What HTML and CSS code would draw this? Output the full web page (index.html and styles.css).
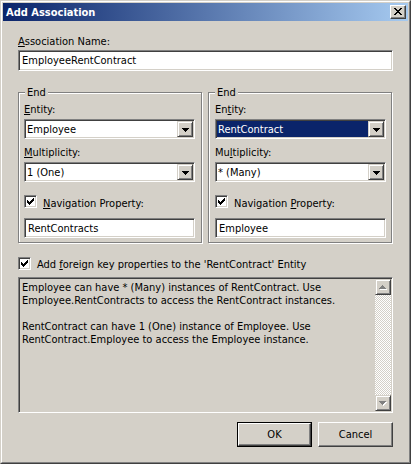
FILE: index.html
```html
<!DOCTYPE html>
<html>
<head>
<meta charset="utf-8">
<title>Add Association</title>
<link rel="stylesheet" href="styles.css">
</head>
<body>
<div class="window">
  <div class="frame">
    <div class="titlebar">
      <span class="title">Add Association</span>
      <span class="close">
        <svg width="8" height="7" viewBox="0 0 8 7" shape-rendering="crispEdges"><path fill="#000" d="M0 0h2v1h-2z M6 0h2v1h-2z M1 1h2v1h-2z M5 1h2v1h-2z M2 2h4v1h-4z M3 3h2v1h-2z M2 4h4v1h-4z M1 5h2v1h-2z M5 5h2v1h-2z M0 6h2v1h-2z M6 6h2v1h-2z"/></svg>
      </span>
    </div>
    <div class="content">
      <div class="label name-label"><u>A</u>ssociation Name:</div>
      <div class="textbox name-box">EmployeeRentContract</div>

      <div class="groups">
        <div class="group group-left">
          <span class="legend">End</span>
          <div class="label first"><u>E</u>ntity:</div>
          <div class="combo">
            <span class="combo-text">Employee</span>
            <span class="combo-btn"><svg width="7" height="4" viewBox="0 0 7 4" shape-rendering="crispEdges"><path fill="#000" d="M0 0h7v1h-7z M1 1h5v1h-5z M2 2h3v1h-3z M3 3h1v1h-1z"/></svg></span>
          </div>
          <div class="label second"><u>M</u>ultiplicity:</div>
          <div class="combo">
            <span class="combo-text">1 (One)</span>
            <span class="combo-btn"><svg width="7" height="4" viewBox="0 0 7 4" shape-rendering="crispEdges"><path fill="#000" d="M0 0h7v1h-7z M1 1h5v1h-5z M2 2h3v1h-3z M3 3h1v1h-1z"/></svg></span>
          </div>
          <div class="check-row nav-row">
            <span class="checkbox"><svg width="7" height="7" viewBox="0 0 7 7" shape-rendering="crispEdges"><path fill="#000" d="M6 0h1v1h-1z M5 1h2v1h-2z M0 2h1v1h-1z M4 2h3v1h-3z M0 3h2v1h-2z M3 3h3v1h-3z M0 4h5v1h-5z M1 5h3v1h-3z M2 6h1v1h-1z"/></svg></span>
            <span class="check-label"><u>N</u>avigation Property:</span>
          </div>
          <div class="textbox nav-box">RentContracts</div>
        </div>

        <div class="group group-right">
          <span class="legend">End</span>
          <div class="label first">En<u>t</u>ity:</div>
          <div class="combo">
            <span class="combo-text selected">RentContract</span>
            <span class="combo-btn"><svg width="7" height="4" viewBox="0 0 7 4" shape-rendering="crispEdges"><path fill="#000" d="M0 0h7v1h-7z M1 1h5v1h-5z M2 2h3v1h-3z M3 3h1v1h-1z"/></svg></span>
          </div>
          <div class="label second">Mu<u>l</u>tiplicity:</div>
          <div class="combo">
            <span class="combo-text">* (Many)</span>
            <span class="combo-btn"><svg width="7" height="4" viewBox="0 0 7 4" shape-rendering="crispEdges"><path fill="#000" d="M0 0h7v1h-7z M1 1h5v1h-5z M2 2h3v1h-3z M3 3h1v1h-1z"/></svg></span>
          </div>
          <div class="check-row nav-row">
            <span class="checkbox"><svg width="7" height="7" viewBox="0 0 7 7" shape-rendering="crispEdges"><path fill="#000" d="M6 0h1v1h-1z M5 1h2v1h-2z M0 2h1v1h-1z M4 2h3v1h-3z M0 3h2v1h-2z M3 3h3v1h-3z M0 4h5v1h-5z M1 5h3v1h-3z M2 6h1v1h-1z"/></svg></span>
            <span class="check-label">Navigation <u>P</u>roperty:</span>
          </div>
          <div class="textbox nav-box">Employee</div>
        </div>
      </div>

      <div class="check-row fk-row">
        <span class="checkbox"><svg width="7" height="7" viewBox="0 0 7 7" shape-rendering="crispEdges"><path fill="#000" d="M6 0h1v1h-1z M5 1h2v1h-2z M0 2h1v1h-1z M4 2h3v1h-3z M0 3h2v1h-2z M3 3h3v1h-3z M0 4h5v1h-5z M1 5h3v1h-3z M2 6h1v1h-1z"/></svg></span>
        <span class="check-label">Add <u>f</u>oreign key properties to the 'RentContract' Entity</span>
      </div>

      <div class="memo">
        <div class="memo-text">
          <div class="line">Employee can have * (Many) instances of RentContract. Use</div>
          <div class="line">Employee.RentContracts to access the RentContract instances.</div>
          <div class="line">&nbsp;</div>
          <div class="line">RentContract can have 1 (One) instance of Employee. Use</div>
          <div class="line">RentContract.Employee to access the Employee instance.</div>
        </div>
        <div class="scrollbar">
          <span class="sb-btn"><svg width="8" height="5" viewBox="0 0 8 5" shape-rendering="crispEdges"><path fill="#fff" d="M4 1h1v1h-1z M3 2h3v1h-3z M2 3h5v1h-5z M1 4h7v1h-7z"/><path fill="#808080" d="M3 0h1v1h-1z M2 1h3v1h-3z M1 2h5v1h-5z M0 3h7v1h-7z"/></svg></span>
          <span class="sb-track"></span>
          <span class="sb-btn"><svg width="8" height="5" viewBox="0 0 8 5" shape-rendering="crispEdges"><path fill="#fff" d="M1 1h7v1h-7z M2 2h5v1h-5z M3 3h3v1h-3z M4 4h1v1h-1z"/><path fill="#808080" d="M0 0h7v1h-7z M1 1h5v1h-5z M2 2h3v1h-3z M3 3h1v1h-1z"/></svg></span>
        </div>
      </div>

      <div class="buttons">
        <div class="btn btn-default"><span class="btn-face">OK</span></div>
        <div class="btn"><span class="btn-face">Cancel</span></div>
      </div>
    </div>
  </div>
</div>
</body>
</html>
```

FILE: styles.css
```css
* {
  box-sizing: border-box;
}

html, body {
  margin: 0;
  padding: 0;
}

body {
  width: 411px;
  height: 464px;
  overflow: hidden;
  background: #d4d0c8;
  font-family: "DejaVu Sans", "Liberation Sans", sans-serif;
  font-stretch: semi-condensed;
  font-size: 11px;
  line-height: 13px;
  color: #000;
}

u {
  text-decoration: underline;
  text-underline-offset: 1px;
}

.window {
  width: 411px;
  height: 464px;
  border: 1px solid;
  border-color: #d4d0c8 #404040 #404040 #d4d0c8;
  background: #d4d0c8;
}

.frame {
  height: 100%;
  border: 1px solid;
  border-color: #fff #808080 #808080 #fff;
  padding: 1px;
  display: flex;
  flex-direction: column;
}

.titlebar {
  flex: none;
  height: 18px;
  background: linear-gradient(to right, #0a246a, #a6caf0);
  display: flex;
  align-items: center;
  justify-content: space-between;
  padding: 0 2px 0 3px;
}

.title {
  color: #fff;
  font-weight: bold;
}

.close {
  width: 16px;
  height: 14px;
  background: #d4d0c8;
  border: 1px solid;
  border-color: #fff #404040 #404040 #fff;
  box-shadow: inset -1px -1px #808080;
  display: flex;
  align-items: center;
  justify-content: center;
  padding-right: 1px;
  padding-bottom: 1px;
}

.close svg, .combo-btn svg, .checkbox svg, .sb-btn svg {
  display: block;
}

.content {
  flex: 1;
  padding: 0 15px;
  display: flex;
  flex-direction: column;
}

.label {
  height: 13px;
  white-space: nowrap;
}

.name-label {
  margin-top: 14px;
}

.sunken {
  border: 1px solid;
}

.textbox, .combo, .checkbox, .memo {
  border: 1px solid;
  border-color: #808080 #fff #fff #808080;
  box-shadow: inset 1px 1px #404040, inset -1px -1px #d4d0c8;
}

.textbox {
  background: #fff;
  display: flex;
  align-items: center;
  padding: 0 3px;
  white-space: nowrap;
}

.name-box {
  margin-top: 2px;
  height: 21px;
}

.groups {
  margin-top: 21px;
  display: flex;
  gap: 6px;
}

.group {
  position: relative;
  width: 184px;
  height: 151px;
  border: 1px solid #808080;
  box-shadow: inset 1px 1px #fff, 1px 1px #fff;
  display: flex;
  flex-direction: column;
  padding-top: 10px;
}

.group-left {
  padding-left: 5px;
  padding-right: 6px;
}

.group-right {
  padding-left: 6px;
  padding-right: 5px;
}

.legend {
  position: absolute;
  top: -7px;
  left: 6px;
  padding: 0 2px;
  background: #d4d0c8;
  line-height: 13px;
}

.combo {
  margin-top: 3px;
  height: 20px;
  padding: 1px;
  background: #fff;
  display: flex;
}

.combo-text {
  flex: 1;
  display: flex;
  align-items: center;
  padding-left: 1px;
  white-space: nowrap;
}

.combo-text.selected {
  background: #0a246a;
  color: #fff;
}

.combo-btn, .sb-btn {
  flex: none;
  width: 16px;
  height: 16px;
  background: #d4d0c8;
  border: 1px solid;
  border-color: #d4d0c8 #404040 #404040 #d4d0c8;
  box-shadow: inset 1px 1px #fff, inset -1px -1px #808080;
  display: flex;
  align-items: center;
  justify-content: center;
}

.combo-btn {
  padding-top: 1px;
}

.label.second {
  margin-top: 7px;
}

.check-row {
  display: flex;
  align-items: flex-start;
  gap: 6px;
  white-space: nowrap;
}

.checkbox {
  flex: none;
  width: 13px;
  height: 13px;
  padding: 1px;
  background: #fff;
  display: flex;
  align-items: center;
  justify-content: center;
}

.check-label {
  padding-top: 2px;
  line-height: 13px;
}

.nav-row {
  margin-top: 13px;
}

.nav-box {
  margin-top: 8px;
  height: 20px;
}

.fk-row {
  margin-top: 14px;
}

.fk-row .check-label {
  padding-top: 1px;
}

.memo {
  margin-top: 6px;
  height: 136px;
  padding: 1px;
  background: #d4d0c8;
  display: flex;
}

.memo-text {
  flex: 1;
  padding: 2px 0 0 2px;
  white-space: nowrap;
  overflow: hidden;
}

.line {
  height: 13px;
}

.scrollbar {
  flex: none;
  width: 16px;
  display: flex;
  flex-direction: column;
}

.sb-track {
  flex: 1;
  background: repeating-conic-gradient(#fff 0 25%, #d4d0c8 0 50%) 0 0 / 2px 2px;
}

.buttons {
  margin-top: 9px;
  display: flex;
  justify-content: flex-end;
  gap: 6px;
}

.btn {
  width: 75px;
  height: 25px;
  border: 1px solid;
  border-color: #fff #404040 #404040 #fff;
  box-shadow: inset -1px -1px #808080;
  display: flex;
}

.btn-face {
  flex: 1;
  display: flex;
  align-items: center;
  justify-content: center;
}

.btn-default {
  border: 1px solid #000;
  box-shadow: none;
}

.btn-default .btn-face {
  border: 1px solid;
  border-color: #fff #404040 #404040 #fff;
  box-shadow: inset -1px -1px #808080;
}
```
